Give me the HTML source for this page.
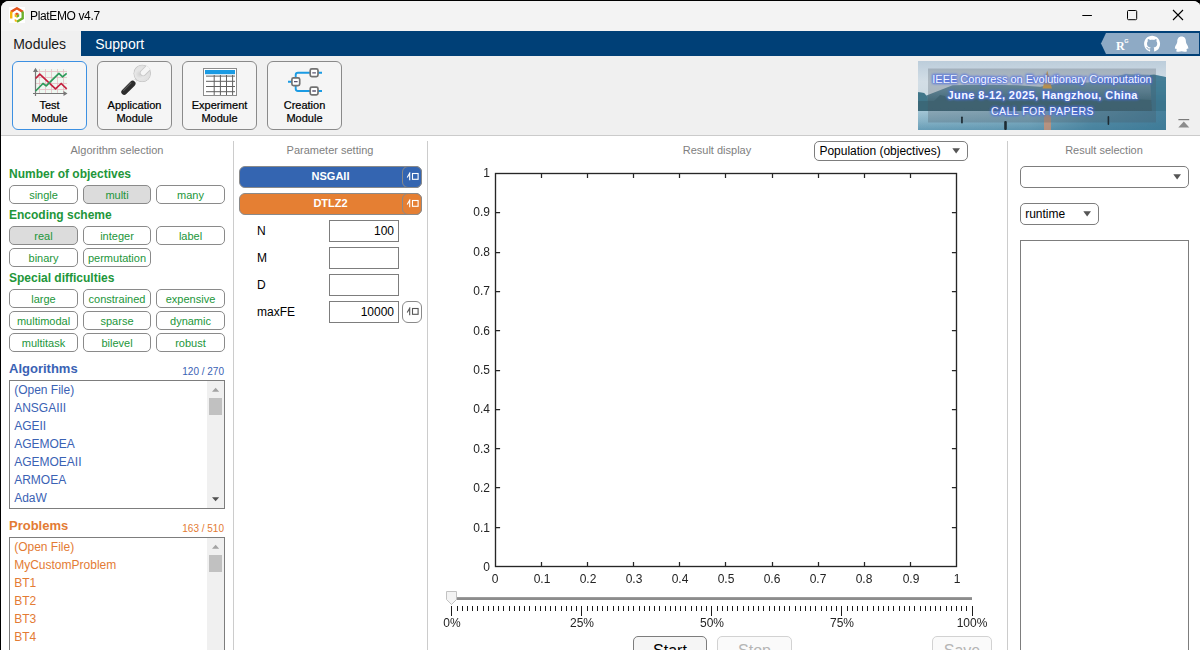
<!DOCTYPE html>
<html>
<head>
<meta charset="utf-8">
<title>PlatEMO v4.7</title>
<style>
html,body{margin:0;padding:0;}
body{width:1200px;height:650px;overflow:hidden;background:#000;font-family:"Liberation Sans",sans-serif;font-size:12px;color:#000;}
#w{position:absolute;left:1px;top:1px;width:1200px;height:660px;background:#fff;border-radius:8px 8px 0 0;overflow:hidden;}
#w *{box-sizing:border-box;}
.a{position:absolute;white-space:nowrap;}
/* title bar */
#tb{left:0;top:0;width:1201px;height:30px;background:#f3f3f3;}
#ttl{will-change:transform;left:29px;top:6px;height:18px;line-height:18px;font-size:12px;letter-spacing:-0.36px;color:#000;}
/* menu */
#mb{left:0;top:30px;width:1201px;height:25px;background:#004077;}
#mtab{left:0;top:30px;width:80px;height:25px;background:#f0f0f0;}
#mod{left:12.2px;top:33px;height:20px;line-height:20px;font-size:14px;color:#1a1a1a;}
#sup{left:94.2px;top:33px;height:20px;line-height:20px;font-size:14px;color:#fff;}
/* toolstrip */
#ts{left:0;top:55px;width:1201px;height:79px;background:#f0f0f0;}
#tsl{left:0;top:134px;width:1201px;height:1px;background:#cbcbcb;}
.mbtn{top:60px;width:75px;height:69px;border:1px solid #8a8a8a;border-radius:6px;background:#f5f5f5;}
.mbtn.sel{border-color:#3c90e2;background:#f6f6f6;}
.mtx{top:98px;width:75px;text-align:center;font-size:11px;line-height:13px;color:#000;-webkit-text-stroke:0.22px #000;}
/* panels */
.vd{top:140px;width:1px;height:520px;background:#cccccc;}
.hd{top:142px;height:14px;line-height:14px;font-size:11px;color:#808080;text-align:center;}
.gl{left:8px;height:16px;line-height:16px;font-size:12px;font-weight:bold;color:#22963a;}
.tg{height:19px;line-height:19px;border:1px solid #8a8a8a;border-radius:5px;background:#fff;font-size:11px;color:#22963a;text-align:center;}
.tg.on{background:#dcdcdc;}
.c1{left:8px;width:69px;}.c2{left:82px;width:68px;}.c3{left:155px;width:69px;}
.lb{left:8px;width:216px;border:1px solid #7d7d7d;background:#fff;}
.li{left:4.2px;height:18px;line-height:18px;font-size:12px;}
.sb{right:0;top:0;width:17px;background:#f0f0f0;}
.th{left:2px;width:13px;background:#c1c1c1;}
.bar{left:238px;width:183px;height:22px;border:1px solid #8a8a8a;border-radius:6px;color:#fff;font-size:11px;font-weight:bold;line-height:18px;text-align:center;}
.bb{left:401px;width:20px;height:22px;border:1px solid #8a8a8a;border-radius:6px;}
.pl{left:256px;height:22px;line-height:22px;font-size:12px;color:#000;}
.pi{left:328px;width:70px;height:22px;border:1px solid #7d7d7d;background:#fff;font-size:12px;line-height:20px;text-align:right;padding-right:4px;color:#000;}
.dd{height:20px;border:1px solid #7d7d7d;border-radius:5px;background:#fff;font-size:12px;color:#000;}
.tk{will-change:transform;font-size:12px;color:#242424;height:14px;line-height:14px;}
.btn{top:635px;height:24px;border:1px solid #7d7d7d;border-radius:5px;background:#f5f5f5;font-size:16px;line-height:27px;text-align:center;color:#000;}
.btn.dis{border-color:#d2d2d2;color:#b5b5b5;background:#fafafa;}
</style>
</head>
<body>
<div id="w">
<!-- TITLE BAR -->
<div class="a" id="tb"></div>
<svg class="a" style="left:8px;top:6px" width="16" height="16" viewBox="0 0 16 16">
<rect width="16" height="16" fill="#fff"/>
<g fill="none" stroke-width="2.4" stroke-linejoin="miter">
<polyline points="1.9,4.9 7.9,1.3 13.9,4.9" stroke="#e4521b"/>
<polyline points="2.2,4.6 2.2,11.4" stroke="#f6b40c"/>
<polyline points="13.7,4.6 13.7,11.3 7.9,14.7" stroke="#6cb02c"/>
<polygon points="5.700,11.900 7.700,13 7.700,15.300 5.700,14.200" fill="#f6b40c" stroke="none"/>
</g>
<polygon points="7.9,5.6 10.2,6.9 7.9,8.2 5.6,6.9" fill="#e4521b"/>
<polygon points="5.6,6.9 7.9,8.2 7.9,10.8 5.6,9.5" fill="#f6b40c"/>
<polygon points="10.2,6.9 7.9,8.2 7.9,10.8 10.2,9.5" fill="#6cb02c"/>
</svg>
<div class="a" id="ttl">PlatEMO v4.7</div>
<svg class="a" style="left:1070px;top:0" width="130" height="30" viewBox="0 0 130 30">
<g fill="none" stroke="#000" stroke-width="1">
<line x1="11.3" y1="14.5" x2="20.9" y2="14.5"/>
<rect x="56.500" y="9.500" width="9.200" height="9.200" rx="1"/>
<path d="M102,9 L112,19 M112,9 L102,19" stroke-width="1.1"/>
</g>
</svg>
<!-- MENU BAR -->
<div class="a" id="mb"></div>
<div class="a" id="mtab"></div>
<div class="a" id="mod">Modules</div>
<div class="a" id="sup">Support</div>
<!-- TOOLSTRIP -->
<div class="a" id="ts"></div>
<div class="a" id="tsl"></div>
<div class="a mbtn sel" style="left:11px"></div>
<div class="a mbtn" style="left:96px"></div>
<div class="a mbtn" style="left:181px"></div>
<div class="a mbtn" style="left:266px"></div>
<div class="a mtx" style="left:11px;">Test<br>Module</div>
<div class="a mtx" style="left:96px;">Application<br>Module</div>
<div class="a mtx" style="left:181px;">Experiment<br>Module</div>
<div class="a mtx" style="left:266px;">Creation<br>Module</div>
<!-- ICONS -->
<svg class="a" style="left:0;top:55px" width="400" height="80" viewBox="1 56 400 80">
<!-- test module icon -->
<rect x="36" y="69" width="31" height="24.5" fill="#eef8f1"/>
<g stroke="#e6bcc4" stroke-width="0.8">
<path d="M39.5,69V93.5M45.5,69V93.5M51.5,69V93.5M57.5,69V93.5M63.5,69V93.5"/>
<path d="M36,71.5H67M36,77.5H67M36,83.5H67M36,89.5H67"/>
</g>
<g stroke="#777" stroke-width="1.2" fill="none">
<path d="M35.5,96V69.5M33,93.5H65"/>
</g>
<path d="M33,72 L35.5,67.8 L38,72Z M63.5,91 L67.5,93.5 L63.5,96Z" fill="#777"/>
<polyline points="35.6,78.5 39.8,74.2 55.5,88.9 61.2,83.5 66.7,88.9" fill="none" stroke="#c4213f" stroke-width="1.7" stroke-linejoin="round"/>
<polyline points="35.6,91 43,83.5 46.2,85.9 58.9,73.3 62.6,76.8 66.7,73.3" fill="none" stroke="#2f9a5b" stroke-width="1.7" stroke-linejoin="round"/>
<!-- application icon (wrench) -->
<defs><radialGradient id="wg" cx="0.35" cy="0.55" r="0.75"><stop offset="0" stop-color="#d2d2d2"/><stop offset="0.35" stop-color="#e6e6e6"/><stop offset="1" stop-color="#dcdcdc"/></radialGradient>
<clipPath id="wc"><circle cx="142.2" cy="73.4" r="8.9"/></clipPath></defs>
<g>
<line x1="132.8" y1="83.2" x2="137.8" y2="78.2" stroke="#dadada" stroke-width="3.2"/>
<line x1="133.4" y1="82.6" x2="135.6" y2="80.4" stroke="#fafafa" stroke-width="2.4"/>
<g clip-path="url(#wc)">
<circle cx="142.2" cy="73.4" r="8.9" fill="#c2c2c2"/>
<circle cx="142.2" cy="73.4" r="8.1" fill="url(#wg)"/>
<line x1="143.2" y1="72.8" x2="153" y2="63" stroke="#c6c6c6" stroke-width="6.6" stroke-linecap="round"/>
<line x1="143.2" y1="72.8" x2="153" y2="63" stroke="#f5f5f5" stroke-width="5" stroke-linecap="round"/>
</g>
<line x1="124.2" y1="92" x2="132.6" y2="83.6" stroke="#2d2d2d" stroke-width="5.8" stroke-linecap="round"/>
<line x1="123.600" y1="90.300" x2="131" y2="82.900" stroke="#5c5c5c" stroke-width="1.200" stroke-linecap="round"/>
</g>
<!-- experiment icon (table) -->
<rect x="203.5" y="68.5" width="33" height="27" fill="#fff" stroke="#8c8c8c" stroke-width="1"/>
<rect x="205" y="70" width="30" height="4.2" fill="#1b9be3"/>
<g stroke="#606060" stroke-width="1">
<path d="M206,76.1H235M206,81.3H235M206,86.5H235M206,91.7H235"/>
<path d="M214.2,75V95M220.4,75V95M226.5,75V95M232.6,75V95"/>
</g>
<!-- creation icon -->
<g fill="none" stroke="#1b9be3" stroke-width="1.9">
<path d="M288,81.8H292M295.7,78V75 Q295.7,72.8 298,72.8 H310M295.7,85.5V88.8 Q295.7,91 298,91 H310M318,72.8H322M318,91H322"/>
</g>
<g fill="#fff" stroke="#727272" stroke-width="1.7">
<rect x="291.9" y="77.8" width="7.8" height="7.8" rx="1.6"/>
<rect x="310.2" y="68.9" width="7.8" height="7.8" rx="1.6"/>
<rect x="310.2" y="87.1" width="7.8" height="7.8" rx="1.6"/>
</g>
<g stroke="#5b5470" stroke-width="1.3">
<path d="M294,81.7H297.6M312.3,72.8H315.9M312.3,91H315.9"/>
</g>
</svg>
<!-- menubar right icons -->
<svg class="a" style="left:1090px;top:30px" width="111" height="25" viewBox="1091 31 111 25">
<polygon points="1106,33 1199,33 1199,54 1106,54 1101,43.5" fill="#8eaac5"/>
<text transform="translate(1115.9,50.300) scale(0.900,1)" font-family="Liberation Serif" font-weight="bold" font-size="13.400" fill="#fff">R</text>
<text x="1124.300" y="43.200" font-family="Liberation Sans" font-weight="bold" font-size="5.600" fill="#fff">G</text>
<g transform="translate(1144.1,35.8) scale(1.0)">
<path fill="#fff" d="M8 0C3.58 0 0 3.58 0 8c0 3.54 2.29 6.53 5.47 7.59.4.07.55-.17.55-.38 0-.19-.01-.82-.01-1.49-2.01.37-2.53-.49-2.69-.94-.09-.23-.48-.94-.82-1.13-.28-.15-.68-.52-.01-.53.63-.01 1.08.58 1.23.82.72 1.21 1.87.87 2.33.66.07-.52.28-.87.51-1.07-1.78-.2-3.64-.89-3.64-3.95 0-.87.31-1.59.82-2.15-.08-.2-.36-1.02.08-2.12 0 0 .67-.21 2.2.82.64-.18 1.32-.27 2-.27.68 0 1.36.09 2 .27 1.53-1.04 2.2-.82 2.2-.82.44 1.1.16 1.92.08 2.12.51.56.82 1.27.82 2.15 0 3.07-1.87 3.75-3.65 3.95.29.25.54.73.54 1.48 0 1.07-.01 1.93-.01 2.2 0 .21.15.46.55.38A8.013 8.013 0 0016 8c0-4.42-3.58-8-8-8z"/>
</g>
<path fill="#fff" d="M1181.6,36.6 c-3,0 -4.3,2.3 -4.3,4.6 c0,0.8 -0.1,1.4 -0.5,2.2 c-0.9,1.5 -1.9,3.2 -1.9,4.8 c0,0.9 0.5,0.9 1.1,0.1 c0.2,0.7 0.5,1.2 1,1.7 c-0.6,0.2 -1,0.6 -1,1 c0,0.6 1.2,0.7 2.6,0.7 c1.3,0 2.3,-0.2 3,-0.5 c0.7,0.3 1.7,0.5 3,0.5 c1.4,0 2.6,-0.1 2.6,-0.7 c0,-0.4 -0.4,-0.8 -1,-1 c0.5,-0.5 0.8,-1 1,-1.7 c0.6,0.8 1.1,0.8 1.1,-0.1 c0,-1.6 -1,-3.3 -1.9,-4.8 c-0.4,-0.8 -0.5,-1.4 -0.5,-2.2 c0,-2.3 -1.3,-4.6 -4.3,-4.6z"/>
</svg>
<!-- BANNER -->
<svg class="a" style="left:917px;top:60px" width="248" height="69" viewBox="0 0 248 69">
<defs>
<linearGradient id="sky" x1="0" y1="0" x2="0" y2="1"><stop offset="0" stop-color="#bccddb"/><stop offset="0.3" stop-color="#d3dee6"/><stop offset="0.7" stop-color="#c9d8e0"/></linearGradient>
<linearGradient id="mt" x1="0" y1="0" x2="0" y2="1"><stop offset="0" stop-color="#86a9bd"/><stop offset="0.45" stop-color="#5f8a9d"/><stop offset="0.75" stop-color="#3d6b7b"/><stop offset="1" stop-color="#3b6878"/></linearGradient>
<linearGradient id="wt" x1="0" y1="0" x2="0" y2="1"><stop offset="0" stop-color="#a4c6d6"/><stop offset="0.5" stop-color="#86b2c6"/><stop offset="1" stop-color="#5f97b2"/></linearGradient>
<linearGradient id="wr" x1="0" y1="0" x2="1" y2="0"><stop offset="0" stop-color="#3a7794" stop-opacity="0"/><stop offset="0.45" stop-color="#3a7794" stop-opacity="0.2"/><stop offset="0.7" stop-color="#3a7794" stop-opacity="0.7"/><stop offset="1" stop-color="#3a7794" stop-opacity="0.9"/></linearGradient>
<filter id="gl" x="-10%" y="-40%" width="120%" height="180%"><feGaussianBlur stdDeviation="0.9"/></filter>
<filter id="bl" x="-10%" y="-10%" width="120%" height="120%"><feGaussianBlur stdDeviation="0.7"/></filter>
</defs>
<rect width="248" height="69" fill="url(#sky)"/>
<g filter="url(#bl)">
<polygon points="-2,31 6,32 8.400,34.600 20,30 34.600,24.300 65,23.800 99.500,24.300 122,25.800 144.800,21.500 170,21.500 196,15.800 207.400,13 236,14 250,16.400 250,52 -2,52" fill="url(#mt)"/>
<polygon points="-2,31 6,32 9,36 9,50 -2,50" fill="#3f7689"/>
<polygon points="16,40 22,34 27,35 31,40 60,38 100,40 140,37 180,40 215,38 250,40 250,52 -2,52 -2,40" fill="#3a6675" opacity="0.85"/>
<polygon points="232,14 236,13.500 250,16.400 250,52 234,52" fill="#3b7892" opacity="0.85"/>
<rect x="-2" y="50" width="252" height="21" fill="url(#wt)"/>
<rect x="-2" y="50" width="252" height="21" fill="url(#wr)"/>
<polygon points="129.200,9.500 126.800,18 125.500,24 124.500,27.500 134,27.500 133,24 131.600,18" fill="#dfa546"/>
<rect x="126" y="54" width="7" height="17" fill="#d9906c" opacity="0.7"/>
</g>
<rect x="10" y="7.500" width="228" height="54" fill="#4a5560" opacity="0.27"/>
<g fill="#1d2b33"><rect x="43.100" y="55.500" width="1.700" height="7" rx="0.8"/><rect x="86.200" y="60" width="2.600" height="9" rx="1.100"/><rect x="189.600" y="55" width="1.600" height="9" rx="0.8"/></g>
<g font-family="Liberation Sans" text-anchor="middle">
<g fill="#4a6ae0" stroke="#4a6ae0" stroke-width="2.200" stroke-linejoin="round" filter="url(#gl)" opacity="0.8">
<text x="124" y="21.800" font-size="11">IEEE Congress on Evolutionary Computation</text>
<text x="124.700" y="38.200" font-size="11" font-weight="bold" letter-spacing="0.41">June 8-12, 2025, Hangzhou, China</text>
<text x="124.500" y="54" font-size="10.500" letter-spacing="0.5">CALL FOR PAPERS</text>
</g>
<g fill="#f4f7ff">
<text x="124" y="21.800" font-size="11">IEEE Congress on Evolutionary Computation</text>
<text x="124.700" y="38.200" font-size="11" font-weight="bold" letter-spacing="0.41">June 8-12, 2025, Hangzhou, China</text>
<text x="124.500" y="54" font-size="10.500" letter-spacing="0.5">CALL FOR PAPERS</text>
</g>
</g>
</svg>
<svg class="a" style="left:1176px;top:116px" width="14" height="12" viewBox="0 0 14 12"><rect x="1.400" y="2.100" width="10.800" height="1.100" fill="#6e6e6e"/><polygon points="6.800,4.400 12.300,10.400 1.300,10.400" fill="#8c8c8c"/></svg>
<!-- PANELS -->
<div class="a vd" style="left:232px"></div>
<div class="a vd" style="left:426px"></div>
<div class="a vd" style="left:1006px"></div>
<div class="a hd" style="left:16px;width:200px">Algorithm selection</div>
<div class="a hd" style="left:229px;width:200px">Parameter setting</div>
<div class="a hd" style="left:616px;width:200px">Result display</div>
<div class="a hd" style="left:1003px;width:200px">Result selection</div>
<!-- LEFT PANEL -->
<div class="a gl" style="top:165px">Number of objectives</div>
<div class="a tg c1" style="top:184px">single</div>
<div class="a tg c2 on" style="top:184px">multi</div>
<div class="a tg c3" style="top:184px">many</div>
<div class="a gl" style="top:206px">Encoding scheme</div>
<div class="a tg c1 on" style="top:225px">real</div>
<div class="a tg c2" style="top:225px">integer</div>
<div class="a tg c3" style="top:225px">label</div>
<div class="a tg c1" style="top:247px">binary</div>
<div class="a tg c2" style="top:247px">permutation</div>
<div class="a gl" style="top:269px">Special difficulties</div>
<div class="a tg c1" style="top:288px">large</div>
<div class="a tg c2" style="top:288px">constrained</div>
<div class="a tg c3" style="top:288px">expensive</div>
<div class="a tg c1" style="top:310px">multimodal</div>
<div class="a tg c2" style="top:310px">sparse</div>
<div class="a tg c3" style="top:310px">dynamic</div>
<div class="a tg c1" style="top:332px">multitask</div>
<div class="a tg c2" style="top:332px">bilevel</div>
<div class="a tg c3" style="top:332px">robust</div>
<div class="a" style="left:8px;top:359px;height:18px;line-height:18px;font-size:13px;font-weight:bold;color:#3a62b4">Algorithms</div>
<div class="a" style="left:123px;width:100px;text-align:right;top:363.5px;height:14px;line-height:14px;font-size:10px;color:#3a62b4">120 / 270</div>
<div class="a lb" style="top:379px;height:129px;color:#3a62b4">
<div class="a li" style="top:0px">(Open File)</div><div class="a li" style="top:18px">ANSGAIII</div><div class="a li" style="top:36px">AGEII</div><div class="a li" style="top:54px">AGEMOEA</div><div class="a li" style="top:72px">AGEMOEAII</div><div class="a li" style="top:90px">ARMOEA</div><div class="a li" style="top:108px">AdaW</div>
<div class="a sb" style="height:127px"><div class="a th" style="top:17px;height:17px"></div><svg class="a" style="left:0;top:0" width="17" height="127"><polygon points="5,10.700 12.200,10.700 8.600,6.700" fill="#a3a3a3"/><polygon points="5,116.200 12.200,116.200 8.600,120.200" fill="#505050"/></svg></div>
</div>
<div class="a" style="left:8px;top:516px;height:18px;line-height:18px;font-size:13px;font-weight:bold;color:#e37b34">Problems</div>
<div class="a" style="left:123px;width:100px;text-align:right;top:520.5px;height:14px;line-height:14px;font-size:10px;color:#e37b34">163 / 510</div>
<div class="a lb" style="top:536px;height:128px;color:#e37b34">
<div class="a li" style="top:0px">(Open File)</div><div class="a li" style="top:18px">MyCustomProblem</div><div class="a li" style="top:36px">BT1</div><div class="a li" style="top:54px">BT2</div><div class="a li" style="top:72px">BT3</div><div class="a li" style="top:90px">BT4</div><div class="a li" style="top:108px">BT5</div>
<div class="a sb" style="height:126px"><div class="a th" style="top:17px;height:17px"></div><svg class="a" style="left:0;top:0" width="17" height="126"><polygon points="5,10.700 12.200,10.700 8.600,6.700" fill="#a3a3a3"/></svg></div>
</div>
<!-- PARAM PANEL -->
<div class="a bar" style="top:165px;background:#3465b1">NSGAII</div>
<div class="a bb" style="top:165px;background:#3465b1"></div>
<svg class="a" style="left:405px;top:171px" width="14" height="10" viewBox="0 0 14 10"><path d="M1.200,5.500 L3.700,1.200 V8.200" fill="none" stroke="#fff" stroke-width="1.100"/><rect x="6.500" y="1.500" width="5.600" height="5.800" fill="none" stroke="#fff" stroke-width="1.100"/></svg>
<div class="a bar" style="top:192px;background:#e57f33">DTLZ2</div>
<div class="a bb" style="top:192px;background:#e57f33"></div>
<svg class="a" style="left:405px;top:198px" width="14" height="10" viewBox="0 0 14 10"><path d="M1.200,5.500 L3.700,1.200 V8.200" fill="none" stroke="#fff" stroke-width="1.100"/><rect x="6.500" y="1.500" width="5.600" height="5.800" fill="none" stroke="#fff" stroke-width="1.100"/></svg>
<div class="a pl" style="top:219px">N</div><div class="a pi" style="top:219px">100</div>
<div class="a pl" style="top:246px">M</div><div class="a pi" style="top:246px"></div>
<div class="a pl" style="top:273px">D</div><div class="a pi" style="top:273px"></div>
<div class="a pl" style="top:300px">maxFE</div><div class="a pi" style="top:300px">10000</div>
<div class="a bb" style="top:300px;background:#fff"></div>
<svg class="a" style="left:405px;top:306px" width="14" height="10" viewBox="0 0 14 10"><path d="M1.200,5.500 L3.700,1.200 V8.200" fill="none" stroke="#555" stroke-width="1.100"/><rect x="6.500" y="1.500" width="5.600" height="5.800" fill="none" stroke="#555" stroke-width="1.100"/></svg>
<!-- CENTER PANEL -->
<div class="a dd" style="left:813px;top:140px;width:154px;line-height:18px;padding-left:4.4px">Population (objectives)</div>
<svg class="a" style="left:951.3px;top:147.2px" width="9" height="6" viewBox="0 0 9 6"><polygon points="0.300,0.200 8,0.200 4.150,5.600" fill="#555"/></svg>
<svg class="a" style="left:429px;top:159px" width="560" height="470" viewBox="430 160 560 470">
<rect x="495.500" y="173.500" width="461" height="393" fill="#fff" stroke="#262626" stroke-width="1.350"/>
<path d="M541.5,566.500v-4.600M541.5,173.500v4.600M587.5,566.500v-4.600M587.5,173.500v4.600M633.5,566.500v-4.600M633.5,173.500v4.600M679.5,566.500v-4.600M679.5,173.500v4.600M725.5,566.500v-4.600M725.5,173.500v4.600M772.5,566.500v-4.600M772.5,173.500v4.600M818.5,566.500v-4.600M818.5,173.500v4.600M864.5,566.500v-4.600M864.5,173.500v4.600M910.5,566.500v-4.600M910.5,173.500v4.600M495.500,527.5h4.600M956.500,527.5h-4.600M495.500,487.5h4.600M956.500,487.5h-4.600M495.500,448.5h4.600M956.500,448.5h-4.600M495.500,409.5h4.600M956.500,409.5h-4.600M495.500,370.5h4.600M956.500,370.5h-4.600M495.500,330.5h4.600M956.500,330.5h-4.600M495.500,291.5h4.600M956.500,291.5h-4.600M495.500,252.5h4.600M956.500,252.5h-4.600M495.500,212.5h4.600M956.500,212.5h-4.600" stroke="#262626" stroke-width="1.250" fill="none"/>
<rect x="456" y="597" width="516" height="3" fill="#8c8c8c"/><rect x="456" y="597" width="516" height="1" fill="#9c9c9c"/>
<path d="M451.5,606v9.700M457.5,606v5M462.5,606v5M467.5,606v5M472.5,606v5M477.5,606v5M483.5,606v5M488.5,606v5M493.5,606v5M498.5,606v5M503.5,606v5M509.5,606v5M514.5,606v5M519.5,606v5M524.5,606v5M529.5,606v5M535.5,606v5M540.5,606v5M545.5,606v5M550.5,606v5M555.5,606v5M561.5,606v5M566.5,606v5M571.5,606v5M576.5,606v5M581.5,606v9.700M587.5,606v5M592.5,606v5M597.5,606v5M602.5,606v5M607.5,606v5M613.5,606v5M618.5,606v5M623.5,606v5M628.5,606v5M633.5,606v5M639.5,606v5M644.5,606v5M649.5,606v5M654.5,606v5M659.5,606v5M665.5,606v5M670.5,606v5M675.5,606v5M680.5,606v5M685.5,606v5M691.5,606v5M696.5,606v5M701.5,606v5M706.5,606v5M711.5,606v9.700M717.5,606v5M722.5,606v5M727.5,606v5M732.5,606v5M737.5,606v5M743.5,606v5M748.5,606v5M753.5,606v5M758.5,606v5M763.5,606v5M769.5,606v5M774.5,606v5M779.5,606v5M784.5,606v5M789.5,606v5M795.5,606v5M800.5,606v5M805.5,606v5M810.5,606v5M815.5,606v5M821.5,606v5M826.5,606v5M831.5,606v5M836.5,606v5M841.5,606v9.700M847.5,606v5M852.5,606v5M857.5,606v5M862.5,606v5M867.5,606v5M873.5,606v5M878.5,606v5M883.5,606v5M888.5,606v5M893.5,606v5M899.5,606v5M904.5,606v5M909.5,606v5M914.5,606v5M920.5,606v5M925.5,606v5M930.5,606v5M935.5,606v5M940.5,606v5M946.5,606v5M951.5,606v5M956.5,606v5M961.5,606v5M966.5,606v5M972.5,606v9.700" stroke="#1c1c1c" stroke-width="1" fill="none" shape-rendering="crispEdges"/>
<path d="M446.500,591.500h10v8l-5,5l-5,-5z" fill="#f3f3f3" stroke="#c2c2c2" stroke-width="1"/>
</svg>
<div class="a tk" style="left:473.5px;top:571px;width:40px;text-align:center">0</div><div class="a tk" style="left:449px;top:559px;width:40px;text-align:right">0</div>
<div class="a tk" style="left:520.6px;top:571px;width:40px;text-align:center">0.1</div><div class="a tk" style="left:449px;top:520px;width:40px;text-align:right">0.1</div>
<div class="a tk" style="left:566.7px;top:571px;width:40px;text-align:center">0.2</div><div class="a tk" style="left:449px;top:480px;width:40px;text-align:right">0.2</div>
<div class="a tk" style="left:612.8px;top:571px;width:40px;text-align:center">0.3</div><div class="a tk" style="left:449px;top:441px;width:40px;text-align:right">0.3</div>
<div class="a tk" style="left:658.9px;top:571px;width:40px;text-align:center">0.4</div><div class="a tk" style="left:449px;top:401px;width:40px;text-align:right">0.4</div>
<div class="a tk" style="left:705.0px;top:571px;width:40px;text-align:center">0.5</div><div class="a tk" style="left:449px;top:362px;width:40px;text-align:right">0.5</div>
<div class="a tk" style="left:751.1px;top:571px;width:40px;text-align:center">0.6</div><div class="a tk" style="left:449px;top:323px;width:40px;text-align:right">0.6</div>
<div class="a tk" style="left:797.2px;top:571px;width:40px;text-align:center">0.7</div><div class="a tk" style="left:449px;top:283px;width:40px;text-align:right">0.7</div>
<div class="a tk" style="left:843.3px;top:571px;width:40px;text-align:center">0.8</div><div class="a tk" style="left:449px;top:244px;width:40px;text-align:right">0.8</div>
<div class="a tk" style="left:890.0px;top:571px;width:40px;text-align:center">0.9</div><div class="a tk" style="left:449px;top:204px;width:40px;text-align:right">0.9</div>
<div class="a tk" style="left:935.5px;top:571px;width:40px;text-align:center">1</div><div class="a tk" style="left:449px;top:165px;width:40px;text-align:right">1</div>
<div class="a tk" style="left:425.5px;top:615px;width:50px;text-align:center">0%</div><div class="a tk" style="left:555.5px;top:615px;width:50px;text-align:center">25%</div><div class="a tk" style="left:685.5px;top:615px;width:50px;text-align:center">50%</div><div class="a tk" style="left:815.5px;top:615px;width:50px;text-align:center">75%</div><div class="a tk" style="left:945.5px;top:615px;width:50px;text-align:center">100%</div>
<div class="a btn" style="left:632px;width:74px">Start</div><div class="a btn dis" style="left:716px;width:75px">Stop</div><div class="a btn dis" style="left:931px;width:60px">Save</div>
<!-- RIGHT PANEL -->
<div class="a dd" style="left:1019px;top:165px;width:169px;height:22px"></div>
<svg class="a" style="left:1172.0px;top:173.0px" width="9" height="6" viewBox="0 0 9 6"><polygon points="0.300,0.200 8,0.200 4.150,5.600" fill="#555"/></svg>
<div class="a dd" style="left:1019px;top:202px;width:79px;height:22px;line-height:20px;padding-left:4.2px">runtime</div>
<svg class="a" style="left:1082.0px;top:210.0px" width="9" height="6" viewBox="0 0 9 6"><polygon points="0.300,0.200 8,0.200 4.150,5.600" fill="#555"/></svg>
<div class="a" style="left:1019px;top:239px;width:169px;height:430px;border:1px solid #7d7d7d;background:#fff"></div>
</div>
</body>
</html>
